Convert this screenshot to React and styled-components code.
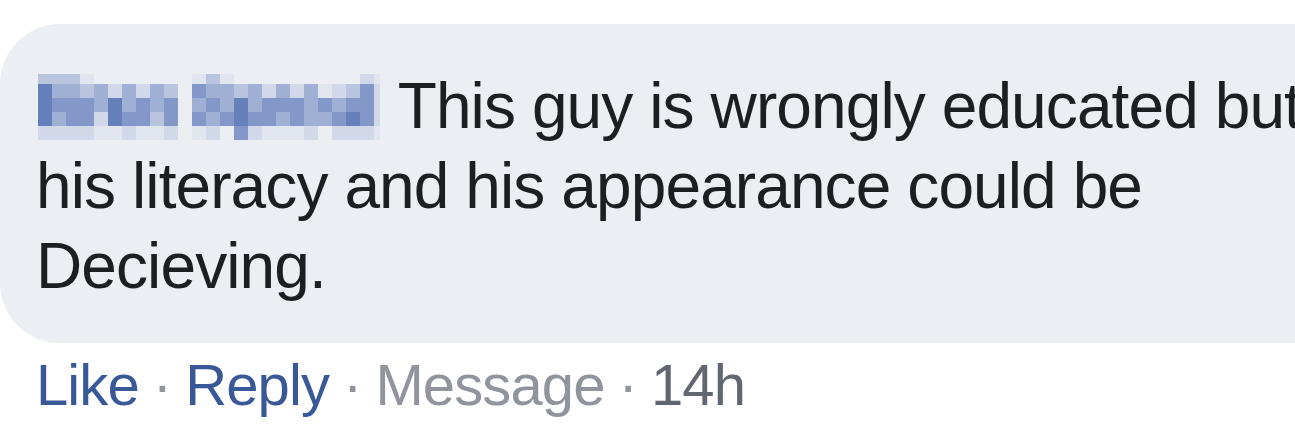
import React from "react";
import styled, { createGlobalStyle } from "styled-components";

const GlobalStyle = createGlobalStyle`
  html, body {
    margin: 0;
    padding: 0;
    background: #ffffff;
    overflow: hidden;
  }
`;

// blurred author name, drawn as a mosaic of blue squares
const palette = ["transparent", "#e0e5ee", "#d0d8e9", "#b9c5df", "#9fb0d4", "#8398c8", "#6580bb"];
const rowHeights = [10, 14, 14, 14, 14];
const words = [
  {
    x: 0,
    rows: ["3331000000", "6443424243", "6555464545", "6455265535", "2222112112"],
  },
  {
    x: 154,
    rows: [
      "13100000000021",
      "54434242412352",
      "45464555454552",
      "54565545445652",
      "12052111202221",
    ],
  },
];

function BlurredName() {
  const cells = [];
  words.forEach((w, wi) => {
    let y = 0;
    w.rows.forEach((row, ri) => {
      row.split("").forEach((c, ci) => {
        const level = Number(c);
        if (level > 0) {
          const width = ci === 13 ? 6 : 14;
          cells.push(
            <rect
              key={`${wi}-${ri}-${ci}`}
              x={w.x + ci * 14}
              y={y}
              width={width}
              height={rowHeights[ri]}
              fill={palette[level]}
            />
          );
        }
      });
      y += rowHeights[ri];
    });
  });
  return (
    <NameMosaic width="342" height="66" viewBox="0 0 342 66">
      {cells}
    </NameMosaic>
  );
}

function App() {
  return (
    <>
      <GlobalStyle />
      <Comment>
        <Bubble>
          <BodyText>
            <BlurredName /> This guy is wrongly educated but
            <br />
            his literacy and his appearance could be
            <br />
            Decieving.
          </BodyText>
        </Bubble>
        <Actions>
          <ActionLink>Like</ActionLink>
          <Dot>·</Dot>
          <ActionLink>Reply</ActionLink>
          <Dot>·</Dot>
          <Muted>Message</Muted>
          <Dot>·</Dot>
          <Time>14h</Time>
        </Actions>
      </Comment>
    </>
  );
}

const Comment = styled.div`
  padding-top: 24px;
  font-family: "Liberation Sans", Arial, sans-serif;
`;

const Bubble = styled.div`
  width: 1360px;
  background: #ebeef2;
  border-radius: 60px;
  padding: 42px 0 37px 36px;
`;

const BodyText = styled.div`
  font-size: 64px;
  line-height: 80px;
  letter-spacing: -0.9px;
  color: #1c1e21;
  white-space: nowrap;
`;

const NameMosaic = styled.svg`
  display: inline-block;
  vertical-align: -12px;
  margin-left: 2px;
  margin-right: 2px;
`;

const Actions = styled.div`
  display: flex;
  align-items: baseline;
  padding-left: 36px;
  margin-top: 6px;
  font-size: 58px;
  line-height: 72px;
  letter-spacing: -0.9px;
  white-space: nowrap;
`;

const ActionLink = styled.span`
  color: #385898;
`;

const Muted = styled.span`
  color: #90949c;
`;

const Time = styled.span`
  color: #606770;
`;

const Dot = styled.span`
  color: #90949c;
  padding: 0 14px;
`;

export default App;
